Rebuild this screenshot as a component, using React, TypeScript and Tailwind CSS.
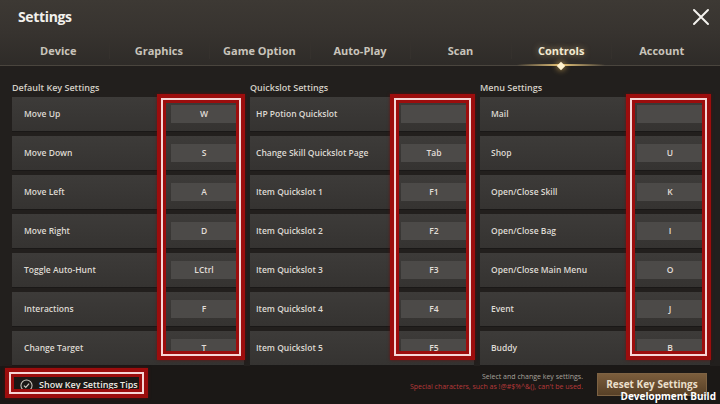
import React from "react";

const font = { fontFamily: '"Open Sans", "Noto Sans", "Liberation Sans", sans-serif' };

const tabs = ["Device", "Graphics", "Game Option", "Auto-Play", "Scan", "Controls", "Account"];

const col1 = [
  ["Move Up", "W"],
  ["Move Down", "S"],
  ["Move Left", "A"],
  ["Move Right", "D"],
  ["Toggle Auto-Hunt", "LCtrl"],
  ["Interactions", "F"],
  ["Change Target", "T"],
];
const col2 = [
  ["HP Potion Quickslot", ""],
  ["Change Skill Quickslot Page", "Tab"],
  ["Item Quickslot 1", "F1"],
  ["Item Quickslot 2", "F2"],
  ["Item Quickslot 3", "F3"],
  ["Item Quickslot 4", "F4"],
  ["Item Quickslot 5", "F5"],
];
const col3 = [
  ["Mail", ""],
  ["Shop", "U"],
  ["Open/Close Skill", "K"],
  ["Open/Close Bag", "I"],
  ["Open/Close Main Menu", "O"],
  ["Event", "J"],
  ["Buddy", "B"],
];

function Column({ title, rows, labelPad }: { title: string; rows: string[][]; labelPad: string }) {
  return (
    <div className="flex flex-col">
      <div className="h-[31px] flex items-end pb-[3px] text-[9px] font-semibold text-[#d4cfc6]">{title}</div>
      <div className="flex flex-col gap-[5px]">
        {rows.map(([label, key]) => (
          <div
            key={label}
            className="h-[34px] flex items-center justify-between bg-gradient-to-b from-[#3d3b39] to-[#353331] pr-[7px] shadow-[0_1px_0_#1a1817]"
          >
            <span className={`${labelPad} text-[8.5px] font-semibold text-[#dedad3]`}>{label}</span>
            <span className="w-[66px] h-[18px] bg-[#4c4a48] flex items-center justify-center text-[8.5px] font-semibold text-[#e2ded8]">
              {key}
            </span>
          </div>
        ))}
      </div>
    </div>
  );
}

function RedBox({ className }: { className: string }) {
  return (
    <div
      className={`absolute border-[4px] border-[#9c0d0d] ${className}`}
      style={{ boxShadow: "inset 0 0 0 2px #f6d6d6, inset 0 0 0 5px #9c0d0d, 0 0 3px rgba(120,0,0,0.6)" }}
    />
  );
}

export default function App() {
  return (
    <div className="w-[720px] h-[404px] relative overflow-hidden bg-[#221f1d] flex flex-col" style={font}>
      {/* Header */}
      <div className="h-[66px] flex flex-col bg-gradient-to-b from-[#3d3934] via-[#37332f] to-[#2e2b28] relative">
        <div className="h-[37px] flex items-center pl-[18px] pb-[5px]">
          <span className="text-[14px] font-bold text-[#f2f0ec] tracking-tight">Settings</span>
        </div>
        <svg className="absolute right-[10px] top-[8px]" width="18" height="18" viewBox="0 0 18 18">
          <path d="M2 2 L16 16 M16 2 L2 16" stroke="#f4f2ee" strokeWidth="2" strokeLinecap="round" />
        </svg>
        <div className="flex-1 grid grid-cols-7 px-[8px] border-b border-[#4a453e] relative">
          {tabs.map((t, i) => (
            <div key={t} className="relative flex items-center justify-center">
              {i > 0 && <div className="absolute left-0 top-[2px] bottom-[6px] w-px bg-[#35312d]" />}
              <span
                className={`text-[11px] font-bold ${t === "Controls" ? "text-[#f3ead2]" : "text-[#c9c4bb]"}`}
                style={t === "Controls" ? { textShadow: "0 0 6px rgba(255,220,150,0.5)" } : undefined}
              >
                {t}
              </span>
              {t === "Controls" && (
                <>
                  <div className="absolute bottom-[-1px] left-[6px] right-[6px] h-[2px] bg-gradient-to-r from-transparent via-[#e8c47a] to-transparent" />
                  <div className="absolute bottom-[-4px] left-1/2 -translate-x-1/2 w-[6px] h-[6px] rotate-45 bg-[#fff2cf] shadow-[0_0_6px_#f0c060]" />
                </>
              )}
            </div>
          ))}
        </div>
      </div>

      {/* Content */}
      <div className="flex-1 grid grid-cols-[232px_224px_230px] gap-x-[6px] px-[12px]">
        <Column title="Default Key Settings" rows={col1} labelPad="pl-[12px]" />
        <Column title="Quickslot Settings" rows={col2} labelPad="pl-[6px]" />
        <Column title="Menu Settings" rows={col3} labelPad="pl-[11px]" />
      </div>

      {/* Footer */}
      <div className="h-[38px] bg-[#1b1816] flex items-center justify-between pl-[20px] pr-[13px]">
        <div className="flex items-center gap-[6px]">
          <svg width="13" height="13" viewBox="0 0 14 14">
            <circle cx="7" cy="7" r="6" fill="none" stroke="#cfcac2" strokeWidth="1.1" />
            <path d="M4.2 7.2 L6.2 9.1 L9.8 5" fill="none" stroke="#cfcac2" strokeWidth="1.3" />
          </svg>
          <span className="text-[9px] font-semibold text-[#ece8e2]">Show Key Settings Tips</span>
        </div>
        <div className="flex items-center gap-[14px]">
          <div className="flex flex-col items-end leading-[10px] mb-[6px]">
            <span className="text-[7px] text-[#a7a29b]">Select and change key settings.</span>
            <span className="text-[7px] text-[#b8383a]">Special characters, such as !@#$%^&amp;(), can't be used.</span>
          </div>
          <div className="w-[110px] h-[23px] mb-[2px] flex items-center justify-center border border-[#7d6243] bg-gradient-to-b from-[#7b5d3c] to-[#574027] text-[10px] font-bold text-[#eadfca]">
            Reset Key Settings
          </div>
        </div>
      </div>

      {/* Overlays */}
      <RedBox className="left-[157px] top-[94px] w-[88px] h-[266px]" />
      <RedBox className="left-[390px] top-[94px] w-[85px] h-[266px]" />
      <RedBox className="left-[626px] top-[94px] w-[85px] h-[266px]" />
      <RedBox className="left-[5px] top-[368px] w-[143px] h-[30px]" />
      <div className="absolute right-[4px] bottom-[3px] text-[10px] font-bold text-white leading-none">Development Build</div>
    </div>
  );
}
